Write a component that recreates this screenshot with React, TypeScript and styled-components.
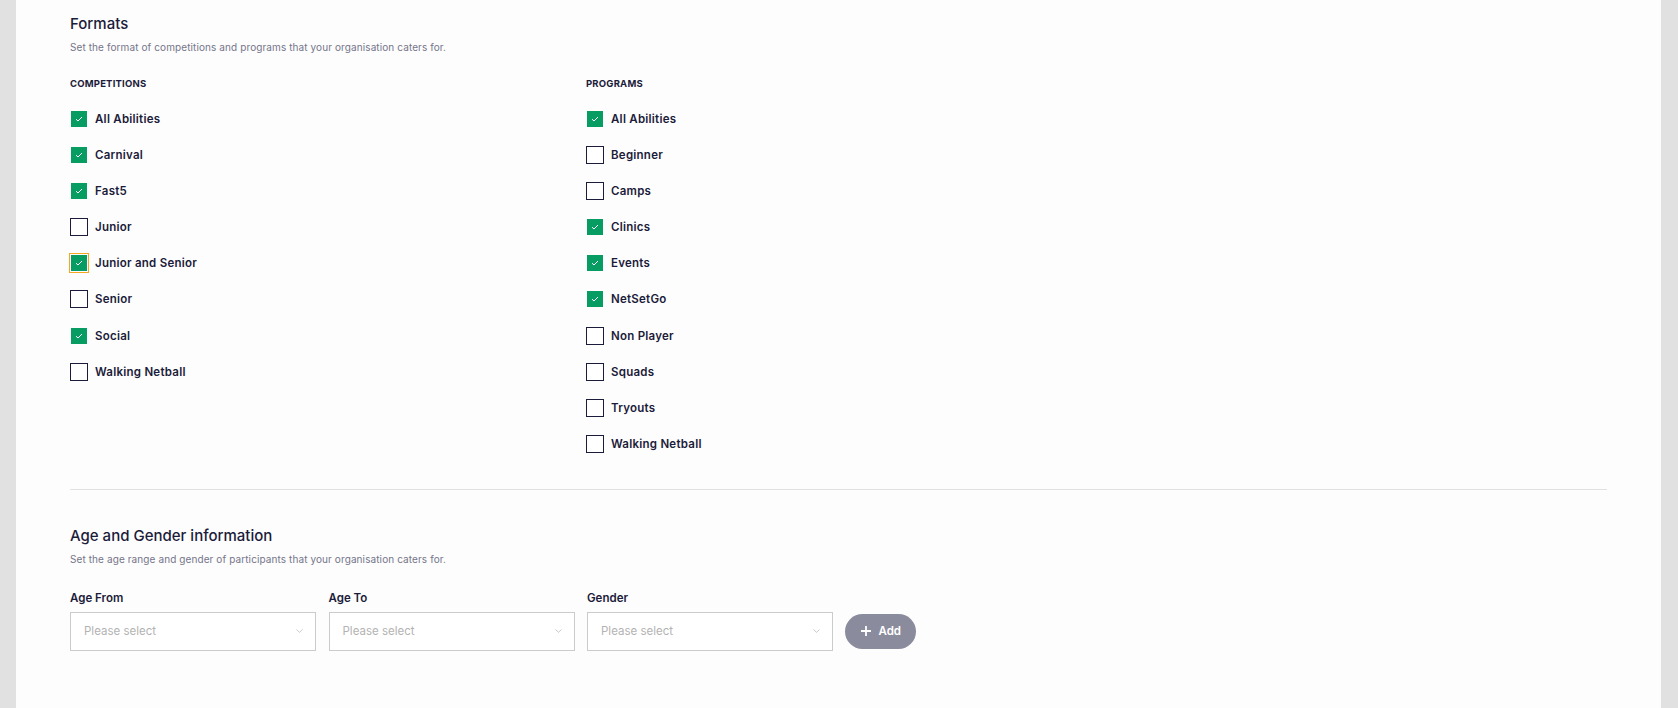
import React from 'react'
import styled, { createGlobalStyle } from 'styled-components'

const GlobalStyle = createGlobalStyle`
    html, body {
        margin: 0;
        padding: 0;
        background: #e1e1e1;
        font-family: Inter, "Noto Sans", sans-serif;
    }
    * { box-sizing: border-box; }
`

const Page = styled.div`
    display: flex;
    min-height: 708px;
    padding: 0 17px 0 16px;
    background: #e1e1e1;
`

const Panel = styled.div`
    flex: 1;
    background: #fdfdfd;
    padding: 14px 54px 40px 54px;
`

const SectionTitle = styled.h2`
    margin: 0;
    font-size: 15px;
    line-height: 20px;
    font-weight: 500;
    color: #1b1b3a;
    letter-spacing: 0;
`

const SectionHint = styled.p`
    margin: 5px 0 0;
    font-size: 10px;
    line-height: 16px;
    color: #75758a;
    letter-spacing: 0.1px;
`

const FormatGrid = styled.div`
    display: grid;
    grid-template-columns: 516px 1fr;
    margin-top: 22px;
`

const Column = styled.div`
    display: flex;
    flex-direction: column;
`

const ColumnHeading = styled.div`
    font-size: 9.5px;
    line-height: 14px;
    font-weight: 700;
    color: #1b1b3a;
    text-transform: uppercase;
    letter-spacing: 0.2px;
    margin-bottom: 19px;
`

const CheckList = styled.div`
    display: flex;
    flex-direction: column;
    gap: 18.1px;
`

const CheckRow = styled.label`
    display: flex;
    align-items: center;
    gap: 7px;
    height: 18px;
    font-size: 11.5px;
    font-weight: 600;
    color: #1b1b3a;
    letter-spacing: 0.25px;
`

const Box = styled.span<{ $checked: boolean; $focused?: boolean }>`
    width: 18px;
    height: 18px;
    flex: none;
    display: flex;
    align-items: center;
    justify-content: center;
    border: 1px solid ${p => (p.$checked ? 'transparent' : '#1b1b3a')};
    background: ${p => (p.$checked ? '#079c62' : '#fff')};
    background-clip: padding-box;
    outline: ${p => (p.$focused ? '1.5px solid #f5a623' : 'none')};
    outline-offset: 0;
`

const Divider = styled.hr`
    border: 0;
    border-top: 1px solid #e1e1e1;
    margin: 36px 0 36px;
`

const FieldGrid = styled.div`
    display: grid;
    grid-template-columns: repeat(3, 246px) auto;
    column-gap: 12.5px;
    align-items: end;
    margin-top: 23px;
`

const Field = styled.div`
    display: flex;
    flex-direction: column;
    gap: 6px;
`

const FieldLabel = styled.div`
    font-size: 11.5px;
    line-height: 16px;
    font-weight: 600;
    color: #1b1b3a;
`

const Select = styled.div`
    height: 39px;
    border: 1px solid #cbcbcb;
    background: #fff;
    display: flex;
    align-items: center;
    justify-content: space-between;
    padding: 0 12px 0 13px;
    font-size: 11.5px;
    color: #b3b3b3;
    letter-spacing: 0;
`

const AddButton = styled.button`
    height: 35px;
    width: 71px;
    margin: 0 0 2px -1px;
    border: 0;
    border-radius: 18px;
    background: #8b8b9e;
    color: #fff;
    display: flex;
    align-items: center;
    justify-content: flex-start;
    gap: 8px;
    font-family: inherit;
    font-size: 11.5px;
    font-weight: 600;
    padding: 0 0 0 16px;
`

const Tick = () => (
    <svg width="8" height="6" viewBox="0 0 8 6" fill="none">
        <path d="M1 3.2 L3 5 L7 1" stroke="#fff" strokeWidth="1" />
    </svg>
)

const Chevron = () => (
    <svg width="7" height="4" viewBox="0 0 7 4" fill="none">
        <path d="M0.5 0.5 L3.5 3.3 L6.5 0.5" stroke="#c4c4c4" strokeWidth="0.9" />
    </svg>
)

const Plus = () => (
    <svg width="10" height="10" viewBox="0 0 10 10" fill="none">
        <path d="M5 0 V10 M0 5 H10" stroke="#fff" strokeWidth="1.8" />
    </svg>
)

interface Option {
    label: string
    checked: boolean
    focused?: boolean
}

const competitions: Option[] = [
    { label: 'All Abilities', checked: true },
    { label: 'Carnival', checked: true },
    { label: 'Fast5', checked: true },
    { label: 'Junior', checked: false },
    { label: 'Junior and Senior', checked: true, focused: true },
    { label: 'Senior', checked: false },
    { label: 'Social', checked: true },
    { label: 'Walking Netball', checked: false },
]

const programs: Option[] = [
    { label: 'All Abilities', checked: true },
    { label: 'Beginner', checked: false },
    { label: 'Camps', checked: false },
    { label: 'Clinics', checked: true },
    { label: 'Events', checked: true },
    { label: 'NetSetGo', checked: true },
    { label: 'Non Player', checked: false },
    { label: 'Squads', checked: false },
    { label: 'Tryouts', checked: false },
    { label: 'Walking Netball', checked: false },
]

const FormatColumn = ({ title, options }: { title: string; options: Option[] }) => (
    <Column>
        <ColumnHeading>{title}</ColumnHeading>
        <CheckList>
            {options.map(o => (
                <CheckRow key={o.label}>
                    <Box $checked={o.checked} $focused={o.focused}>{o.checked && <Tick />}</Box>
                    {o.label}
                </CheckRow>
            ))}
        </CheckList>
    </Column>
)

const SelectField = ({ label }: { label: string }) => (
    <Field>
        <FieldLabel>{label}</FieldLabel>
        <Select>
            Please select
            <Chevron />
        </Select>
    </Field>
)

const App = () => (
    <>
        <GlobalStyle />
        <Page>
            <Panel>
                <SectionTitle>Formats</SectionTitle>
                <SectionHint>Set the format of competitions and programs that your organisation caters for.</SectionHint>
                <FormatGrid>
                    <FormatColumn title="Competitions" options={competitions} />
                    <FormatColumn title="Programs" options={programs} />
                </FormatGrid>

                <Divider />

                <SectionTitle>Age and Gender information</SectionTitle>
                <SectionHint>Set the age range and gender of participants that your organisation caters for.</SectionHint>
                <FieldGrid>
                    <SelectField label="Age From" />
                    <SelectField label="Age To" />
                    <SelectField label="Gender" />
                    <AddButton><Plus />Add</AddButton>
                </FieldGrid>
            </Panel>
        </Page>
    </>
)

export default App
